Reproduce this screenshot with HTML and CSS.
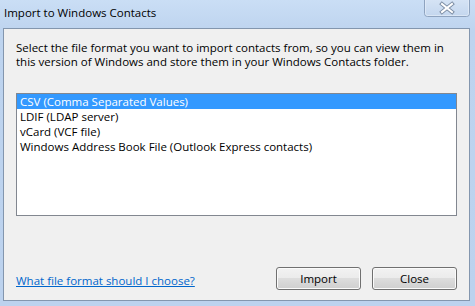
FILE: index.html
```html
<!DOCTYPE html>
<html lang="en">
<head>
<meta charset="utf-8">
<title>Import to Windows Contacts</title>
<link rel="stylesheet" href="styles.css">
</head>
<body>
<div class="window">
  <div class="titlebar">
    <span class="title">Import to Windows Contacts</span>
    <button class="close-btn" aria-label="Close">
      <svg width="46" height="17" viewBox="0 0 46 17">
        <defs>
          <linearGradient id="cg" x1="0" y1="0" x2="0" y2="1">
            <stop offset="0" stop-color="#d6e4f5"/>
            <stop offset="1" stop-color="#c3d6ee"/>
          </linearGradient>
        </defs>
        <path d="M0.5 -1 V13.5 Q0.5 16.5 3.5 16.5 H42.5 Q45.5 16.5 45.5 13.5 V-1" fill="url(#cg)" stroke="#8ea3bf"/>
        <path d="M1.5 -1 V13.5 Q1.5 15.5 3.5 15.5 H42.5 Q44.5 15.5 44.5 13.5 V-1" fill="none" stroke="#e4edf8" stroke-opacity="0.7"/>
        <path d="M18 4 L28 12 M28 4 L18 12" stroke="#7d8ea5" stroke-width="4" stroke-linecap="square" fill="none"/>
        <path d="M18 4 L28 12 M28 4 L18 12" stroke="#ffffff" stroke-width="2" stroke-linecap="square" fill="none"/>
      </svg>
    </button>
  </div>
  <div class="client">
    <p class="intro">Select the file format you want to import contacts from, so you can view them in<br>this version of Windows and store them in your Windows Contacts folder.</p>
    <ul class="listbox">
      <li class="item selected">CSV (Comma Separated Values)</li>
      <li class="item">LDIF (LDAP server)</li>
      <li class="item">vCard (VCF file)</li>
      <li class="item">Windows Address Book File (Outlook Express contacts)</li>
    </ul>
    <div class="footer">
      <a class="help-link" href="#">What file format should I choose?</a>
      <div class="buttons">
        <button class="btn">Import</button>
        <button class="btn">Close</button>
      </div>
    </div>
  </div>
</div>
</body>
</html>
```

FILE: styles.css
```css
html, body {
  margin: 0;
  padding: 0;
}

body {
  width: 475px;
  height: 306px;
  overflow: hidden;
  font-family: "Open Sans", "Noto Sans", sans-serif;
  font-size: 11.5px;
  color: #000;
}

.window {
  width: 475px;
  height: 306px;
  box-sizing: border-box;
  display: flex;
  flex-direction: column;
  background: linear-gradient(#cadef5, #bed4ef 30px, #bcd2ee);
}

.titlebar {
  height: 28px;
  flex: none;
  display: flex;
  align-items: flex-start;
}

.title {
  padding: 6px 0 0 4px;
  line-height: 14px;
  white-space: nowrap;
}

.close-btn {
  margin: 0 5px 0 auto;
  padding: 0;
  border: 0;
  background: none;
  width: 46px;
  height: 17px;
  display: block;
}

.close-btn svg {
  display: block;
}

.client {
  flex: 1;
  margin: 0 5px 5px 3px;
  border: 1px solid #8396ae;
  background: #f0f0f0;
  display: flex;
  flex-direction: column;
  padding: 12px 12px 10px;
}

.intro {
  margin: 0;
  line-height: 14px;
  white-space: nowrap;
}

.listbox {
  list-style: none;
  margin: 24px 0 0;
  padding: 0;
  width: 441px;
  height: 123px;
  box-sizing: border-box;
  border: 1px solid #828790;
  background: #fff;
}

.item {
  height: 15px;
  line-height: 15px;
  padding-left: 3px;
  white-space: nowrap;
}

.item.selected {
  background: #3399ff;
  color: #fff;
}

.footer {
  margin-top: auto;
  display: flex;
  align-items: center;
  justify-content: space-between;
}

.help-link {
  color: #0066cc;
  text-decoration: underline;
  padding-top: 3px;
}

.buttons {
  display: flex;
  gap: 11px;
}

.btn {
  width: 85px;
  height: 23px;
  padding: 0;
  border: 1px solid #707070;
  border-radius: 3px;
  background: linear-gradient(#f2f2f2 0%, #ebebeb 50%, #dddddd 50%, #cfcfcf 100%);
  box-shadow: inset 0 0 0 1px #fbfbfb;
  font-family: inherit;
  font-size: 11.5px;
  color: #000;
}
```
